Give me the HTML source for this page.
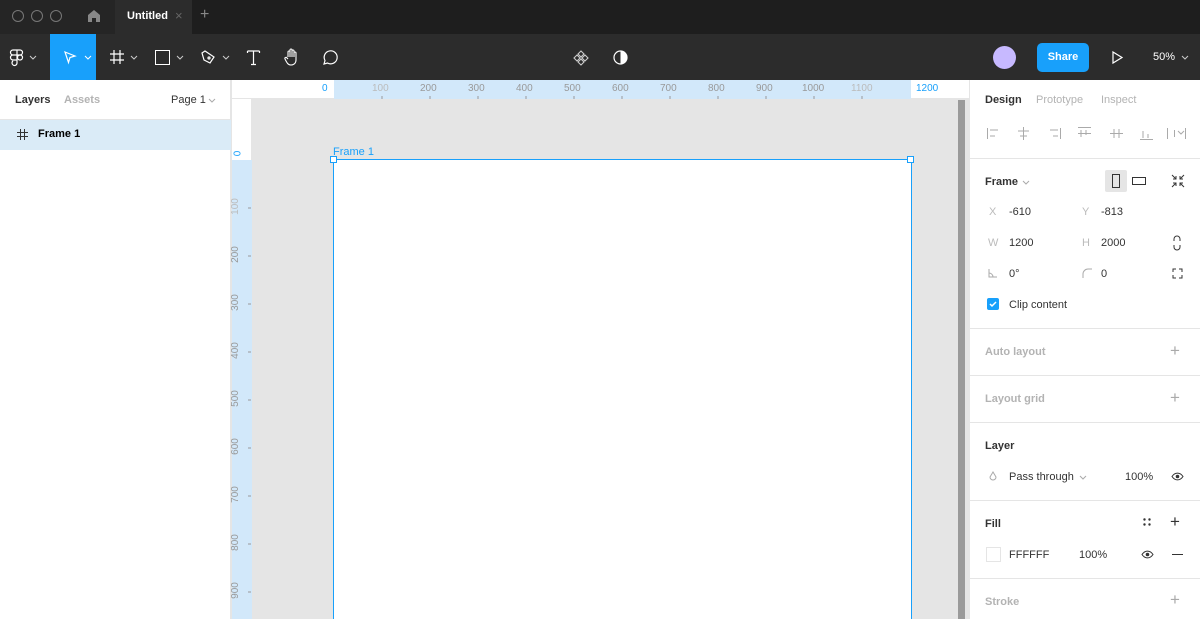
<!DOCTYPE html>
<html style="overflow:hidden;width:1200px;height:619px"><head><meta charset="utf-8"><style>
*{margin:0;padding:0;box-sizing:border-box}
body{width:1200px;height:619px;overflow:hidden;font-family:"Liberation Sans",sans-serif;font-size:11px;color:#333;position:relative;background:#e5e5e5}
.a{position:absolute}
.t{position:absolute;white-space:nowrap}
svg{position:absolute;overflow:visible}
</style></head><body>
<!-- title bar -->
<div class="a" style="left:0;top:0;width:1200px;height:34px;background:#1e1e1e"></div>
<div class="a" style="left:0;top:0;width:115px;height:34px;background:#252525"></div>
<div class="a" style="left:115px;top:0;width:77px;height:34px;background:#2c2c2c"></div>
<div class="a" style="left:12px;top:10px;width:12px;height:12px;border:1px solid #777;border-radius:50%"></div>
<div class="a" style="left:31px;top:10px;width:12px;height:12px;border:1px solid #777;border-radius:50%"></div>
<div class="a" style="left:50px;top:10px;width:12px;height:12px;border:1px solid #777;border-radius:50%"></div>
<svg style="left:87px;top:9px" width="14" height="14"><path d="M1 6 L7 1 L13 6 V13 H9 V9 H5 V13 H1Z" fill="#888"/></svg>
<div class="t" style="left:127px;top:10px;color:#fff;font-weight:bold;font-size:11px">Untitled</div>
<div class="t" style="left:175px;top:8px;color:#666;font-size:13px">×</div>
<div class="t" style="left:200px;top:6px;color:#888;font-size:16px">+</div>
<!-- toolbar -->
<div class="a" style="left:0;top:34px;width:1200px;height:46px;background:#2c2c2c"></div>
<div class="a" style="left:50px;top:34px;width:46px;height:46px;background:#18a0fb"></div>
<svg style="left:10px;top:49px" width="14" height="16" fill="none" stroke="#fff" stroke-width="1.2"><path d="M3 1h4v5H3a2.5 2.5 0 0 1 0-5zM7 1h3a2.5 2.5 0 0 1 0 5H7zM3 6h4v5H3a2.5 2.5 0 0 1 0-5zM7 11v3a2.5 2.5 0 1 1-4-2"/><circle cx="10" cy="8.5" r="2.5"/></svg>
<svg style="left:29px;top:55px" width="8" height="5" fill="none" stroke="#ccc"><path d="M1 1l3 3 3-3"/></svg>
<svg style="left:64px;top:51px" width="12" height="13" fill="none" stroke="#fff" stroke-width="1.2"><path d="M1 1L11 5 6 6.5 4.5 11.5Z"/></svg>
<svg style="left:84px;top:55px" width="8" height="5" fill="none" stroke="#fff"><path d="M1 1l3 3 3-3"/></svg>
<svg style="left:110px;top:50px" width="14" height="14" fill="none" stroke="#fff" stroke-width="1.2"><path d="M4 0v14M10 0v14M0 4h14M0 10h14"/></svg>
<svg style="left:130px;top:55px" width="8" height="5" fill="none" stroke="#ccc"><path d="M1 1l3 3 3-3"/></svg>
<div class="a" style="left:155px;top:50px;width:15px;height:15px;border:1.2px solid #fff"></div>
<svg style="left:176px;top:55px" width="8" height="5" fill="none" stroke="#ccc"><path d="M1 1l3 3 3-3"/></svg>
<svg style="left:201px;top:50px" width="15" height="15" fill="none" stroke="#fff" stroke-width="1.2"><path d="M1 3L4 1 13 7 9 13 3 10Z"/><circle cx="8" cy="8" r="1"/></svg>
<svg style="left:222px;top:55px" width="8" height="5" fill="none" stroke="#ccc"><path d="M1 1l3 3 3-3"/></svg>
<svg style="left:247px;top:50px" width="13" height="15" fill="none" stroke="#fff" stroke-width="1.2"><path d="M0.5 1h12M6.5 1v14M4 14.5h5M0.5 1v2M12.5 1v2"/></svg>
<svg style="left:284px;top:48px" width="17" height="18" fill="none" stroke="#fff" stroke-width="1.1"><path d="M4 9V4a1 1 0 0 1 2 0v5V2a1 1 0 0 1 2 0v7V3a1 1 0 0 1 2 0v6V5a1 1 0 0 1 2 0v7c0 3-2 5-5 5S3 15 1 11a1 1 0 0 1 2-1l1 1"/></svg>
<svg style="left:321px;top:50px" width="17" height="16" fill="none" stroke="#fff" stroke-width="1.2"><path d="M3 14l1-3.5A6.5 6.5 0 1 1 6.5 13Z"/></svg>
<svg style="left:573px;top:50px" width="16" height="16" fill="none" stroke="#ccc" stroke-width="1.1"><path d="M8 1l3 3-3 3-3-3zM8 9l3 3-3 3-3-3zM4 5l3 3-3 3-3-3zM12 5l3 3-3 3-3-3z"/></svg>
<svg style="left:613px;top:50px" width="15" height="15"><circle cx="7.5" cy="7.5" r="6.5" fill="none" stroke="#fff" stroke-width="1.2"/><path d="M7.5 1a6.5 6.5 0 0 1 0 13z" fill="#fff"/></svg>
<div class="a" style="left:993px;top:46px;width:23px;height:23px;border-radius:50%;background:#c7b9ff"></div>
<div class="a" style="left:1037px;top:43px;width:52px;height:29px;border-radius:5px;background:#18a0fb;color:#fff;font-weight:bold;font-size:11px;text-align:center;line-height:29px">Share</div>
<svg style="left:1112px;top:51px" width="11" height="13" fill="none" stroke="#fff" stroke-width="1.2"><path d="M1 1l9 5.5L1 12Z"/></svg>
<div class="t" style="left:1153px;top:51px;color:#fff;font-size:11px">50%</div>
<svg style="left:1181px;top:55px" width="8" height="5" fill="none" stroke="#ccc"><path d="M1 1l3 3 3-3"/></svg>
<!-- left panel -->
<div class="a" style="left:0;top:80px;width:231px;height:539px;background:#fff;border-right:1px solid #e5e5e5"></div>
<div class="t" style="left:15px;top:94px;color:#333;font-weight:bold">Layers</div>
<div class="t" style="left:64px;top:94px;color:#b3b3b3;font-weight:bold">Assets</div>
<div class="t" style="left:171px;top:94px;color:#333">Page 1</div>
<svg style="left:208px;top:98px" width="8" height="5" fill="none" stroke="#aaa"><path d="M1 1l3 3 3-3"/></svg>
<div class="a" style="left:0;top:119px;width:231px;height:1px;background:#e5e5e5"></div>
<div class="a" style="left:0;top:120px;width:231px;height:30px;background:#daebf7"></div>
<svg style="left:17px;top:129px" width="11" height="11" fill="none" stroke="#333"><path d="M3.5 0v11M7.5 0v11M0 3.5h11M0 7.5h11"/></svg>
<div class="t" style="left:38px;top:128px;color:#000;font-weight:bold">Frame 1</div>
<!-- rulers -->
<div class="a" style="left:231px;top:80px;width:739px;height:19px;background:#fff;border-bottom:1px solid #e5e5e5"></div>
<div class="a" style="left:334px;top:80px;width:577px;height:19px;background:#d2e8fa"></div>
<div class="a" style="left:231px;top:99px;width:21px;height:520px;background:#fff;border-right:1px solid #e5e5e5"></div>
<div class="a" style="left:231px;top:160px;width:21px;height:459px;background:#d2e8fa"></div>
<div class="a" style="left:231px;top:80px;width:1px;height:539px;background:#e5e5e5"></div>
<div style="position:absolute;left:0;top:0;font-size:10px;color:#999">
<div class="t" style="left:322px;top:83px;color:#18a0fb">0</div>
<div class="t" style="left:372px;top:83px;color:#bbb">100</div>
<div class="t" style="left:420px;top:83px">200</div>
<div class="t" style="left:468px;top:83px">300</div>
<div class="t" style="left:516px;top:83px">400</div>
<div class="t" style="left:564px;top:83px">500</div>
<div class="t" style="left:612px;top:83px">600</div>
<div class="t" style="left:660px;top:83px">700</div>
<div class="t" style="left:708px;top:83px">800</div>
<div class="t" style="left:756px;top:83px">900</div>
<div class="t" style="left:802px;top:83px">1000</div>
<div class="t" style="left:851px;top:83px;color:#bbb">1100</div>
<div class="t" style="left:916px;top:83px;color:#18a0fb">1200</div>
</div>
<svg style="left:0;top:0" width="1200" height="619" stroke="#999"><path d="M382 96v3M430 96v3M478 96v3M526 96v3M574 96v3M622 96v3M670 96v3M718 96v3M766 96v3M814 96v3M862 96v3M248 208h3M248 256h3M248 304h3M248 352h3M248 400h3M248 448h3M248 496h3M248 544h3M248 592h3"/></svg>
<div style="position:absolute;left:0;top:0;font-size:10px;color:#999">
<div class="t" style="left:231px;top:148px;transform:rotate(-90deg);color:#18a0fb;width:14px;text-align:center">0</div>
<div class="t" style="left:227px;top:201px;transform:rotate(-90deg);color:#bbb">100</div>
<div class="t" style="left:227px;top:249px;transform:rotate(-90deg)">200</div>
<div class="t" style="left:227px;top:297px;transform:rotate(-90deg)">300</div>
<div class="t" style="left:227px;top:345px;transform:rotate(-90deg)">400</div>
<div class="t" style="left:227px;top:393px;transform:rotate(-90deg)">500</div>
<div class="t" style="left:227px;top:441px;transform:rotate(-90deg)">600</div>
<div class="t" style="left:227px;top:489px;transform:rotate(-90deg)">700</div>
<div class="t" style="left:227px;top:537px;transform:rotate(-90deg)">800</div>
<div class="t" style="left:227px;top:585px;transform:rotate(-90deg)">900</div>
</div>
<!-- frame -->
<div class="t" style="left:333px;top:146px;color:#18a0fb;font-size:11px">Frame 1</div>
<div class="a" style="left:333px;top:159px;width:579px;height:462px;background:#fff;border:1px solid #18a0fb"></div>
<div class="a" style="left:330px;top:156px;width:7px;height:7px;background:#fff;border:1px solid #18a0fb"></div>
<div class="a" style="left:907px;top:156px;width:7px;height:7px;background:#fff;border:1px solid #18a0fb"></div>
<div class="a" style="left:958px;top:100px;width:7px;height:519px;background:#9a9a9a"></div>
<!-- right panel -->
<div class="a" style="left:969px;top:80px;width:231px;height:539px;background:#fff;border-left:1px solid #e5e5e5"></div>
<div class="t" style="left:985px;top:94px;color:#333;font-weight:bold">Design</div>
<div class="t" style="left:1036px;top:94px;color:#b3b3b3">Prototype</div>
<div class="t" style="left:1101px;top:94px;color:#b3b3b3">Inspect</div>
<svg style="left:0;top:0" width="1200" height="619" fill="none" stroke="#aaa"><path d="M987.5 128v11M990 130h8M990 136h5M1023.5 127v13M1018 131h11M1020 136h7M1060.5 128v11M1050 130h8M1053 136h5M1078 127.5h13M1081 130v7M1086 130v5M1078 133.5h13M1110 133.5h13M1114 129v9M1119 129v9M1140 139.5h13M1143 131v7M1148 134v4M1167.5 128v11M1185.5 128v11M1174.5 130v7M1178 131l3 3 3-3"/></svg>
<div class="a" style="left:970px;top:158px;width:230px;height:1px;background:#e5e5e5"></div>
<div class="t" style="left:985px;top:176px;color:#333;font-weight:bold">Frame</div>
<svg style="left:1022px;top:180px" width="8" height="5" fill="none" stroke="#aaa"><path d="M1 1l3 3 3-3"/></svg>
<div class="a" style="left:1105px;top:170px;width:22px;height:22px;background:#e5e5e5;border-radius:2px"></div>
<div class="a" style="left:1112px;top:174px;width:8px;height:14px;border:1.3px solid #333"></div>
<div class="a" style="left:1132px;top:177px;width:14px;height:8px;border:1.3px solid #333"></div>
<svg style="left:1171px;top:174px" width="14" height="14" fill="none" stroke="#333"><path d="M1 1l4 4M5 2v3H2M13 1l-4 4M9 2v3h3M1 13l4-4M5 12V9H2M13 13l-4-4M9 12V9h3"/></svg>
<div class="t" style="left:989px;top:206px;color:#bbb">X</div><div class="t" style="left:1009px;top:206px">-610</div>
<div class="t" style="left:1082px;top:206px;color:#bbb">Y</div><div class="t" style="left:1101px;top:206px">-813</div>
<div class="t" style="left:988px;top:237px;color:#bbb">W</div><div class="t" style="left:1009px;top:237px">1200</div>
<div class="t" style="left:1082px;top:237px;color:#bbb">H</div><div class="t" style="left:1101px;top:237px">2000</div>
<svg style="left:1172px;top:235px" width="10" height="16" fill="none" stroke="#333"><path d="M2 6V4a3 3 0 0 1 6 0v2M2 10v2a3 3 0 0 0 6 0v-2"/></svg>
<svg style="left:988px;top:268px" width="10" height="10" fill="none" stroke="#aaa"><path d="M1 1v8h8M1 5a4 4 0 0 1 4 4"/></svg>
<div class="t" style="left:1009px;top:268px">0°</div>
<svg style="left:1082px;top:268px" width="10" height="10" fill="none" stroke="#aaa"><path d="M1 10V6a5 5 0 0 1 5-5h4"/></svg>
<div class="t" style="left:1101px;top:268px">0</div>
<svg style="left:1172px;top:268px" width="11" height="11" fill="none" stroke="#333"><path d="M1 4V1h3M7 1h3v3M10 7v3H7M4 10H1V7"/></svg>
<div class="a" style="left:987px;top:298px;width:12px;height:12px;background:#18a0fb;border-radius:2px"></div>
<svg style="left:989px;top:301px" width="8" height="6" fill="none" stroke="#fff" stroke-width="1.5"><path d="M1 3l2 2 4-4"/></svg>
<div class="t" style="left:1009px;top:299px">Clip content</div>
<div class="a" style="left:970px;top:328px;width:230px;height:1px;background:#e5e5e5"></div>
<div class="t" style="left:985px;top:346px;color:#b3b3b3;font-weight:bold">Auto layout</div>
<div class="t" style="left:1170px;top:341px;color:#aaa;font-size:17px">+</div>
<div class="a" style="left:970px;top:375px;width:230px;height:1px;background:#e5e5e5"></div>
<div class="t" style="left:985px;top:393px;color:#b3b3b3;font-weight:bold">Layout grid</div>
<div class="t" style="left:1170px;top:388px;color:#aaa;font-size:17px">+</div>
<div class="a" style="left:970px;top:422px;width:230px;height:1px;background:#e5e5e5"></div>
<div class="t" style="left:985px;top:440px;color:#333;font-weight:bold">Layer</div>
<svg style="left:989px;top:471px" width="8" height="11" fill="none" stroke="#aaa"><path d="M4 1L1 6a3 3 0 0 0 6 0Z"/></svg>
<div class="t" style="left:1009px;top:471px">Pass through</div>
<svg style="left:1079px;top:475px" width="8" height="5" fill="none" stroke="#aaa"><path d="M1 1l3 3 3-3"/></svg>
<div class="t" style="left:1125px;top:471px">100%</div>
<svg style="left:1171px;top:472px" width="13" height="9" fill="none" stroke="#333"><path d="M1 4.5C4 0 9 0 12 4.5 9 9 4 9 1 4.5Z"/><circle cx="6.5" cy="4.5" r="1.3" fill="#333"/></svg>
<div class="a" style="left:970px;top:500px;width:230px;height:1px;background:#e5e5e5"></div>
<div class="t" style="left:985px;top:518px;color:#333;font-weight:bold">Fill</div>
<svg style="left:1143px;top:518px" width="8" height="8" fill="#333"><circle cx="1.5" cy="1.5" r="1.2"/><circle cx="6.5" cy="1.5" r="1.2"/><circle cx="1.5" cy="6.5" r="1.2"/><circle cx="6.5" cy="6.5" r="1.2"/></svg>
<div class="t" style="left:1170px;top:512px;color:#333;font-size:17px">+</div>
<div class="a" style="left:986px;top:547px;width:15px;height:15px;background:#fff;border:1px solid #e5e5e5"></div>
<div class="t" style="left:1009px;top:549px">FFFFFF</div>
<div class="t" style="left:1079px;top:549px">100%</div>
<svg style="left:1141px;top:550px" width="13" height="9" fill="none" stroke="#333"><path d="M1 4.5C4 0 9 0 12 4.5 9 9 4 9 1 4.5Z"/><circle cx="6.5" cy="4.5" r="1.3" fill="#333"/></svg>
<div class="a" style="left:1172px;top:554px;width:11px;height:1px;background:#333"></div>
<div class="a" style="left:970px;top:578px;width:230px;height:1px;background:#e5e5e5"></div>
<div class="t" style="left:985px;top:596px;color:#b3b3b3;font-weight:bold">Stroke</div>
<div class="t" style="left:1170px;top:590px;color:#aaa;font-size:17px">+</div>
</body></html>
